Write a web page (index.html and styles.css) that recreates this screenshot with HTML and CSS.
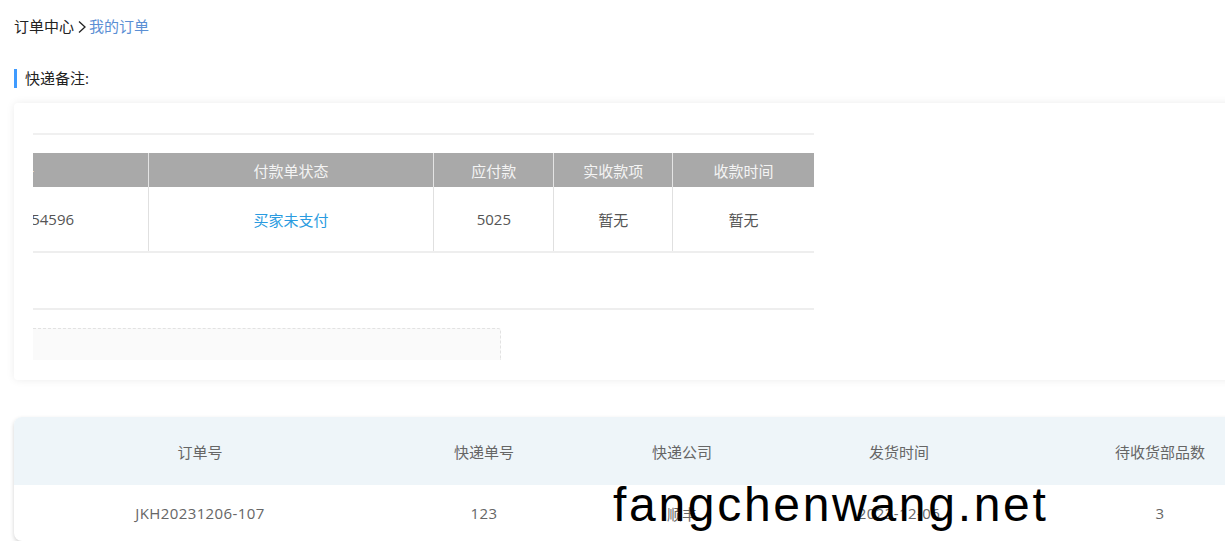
FILE: index.html
```html
<!DOCTYPE html>
<html>

<head>
    <meta charset="utf-8">
    <link rel="stylesheet" href="styles.css">
</head>

<body>

    <div class="crumbs">
        <span>订单中心</span>
        <svg class="crumb-sep" width="10" height="14" viewBox="0 0 10 14"><path d="M2 1.5 L8 7 L2 12.5" fill="none" stroke="#222" stroke-width="1.3"/></svg>
        <a class="crumb-link">我的订单</a>
    </div>

    <div class="section-title">快递备注:</div>

    <div class="card">
        <div class="pay-wrap">
            <div class="pay-scroll">
                <table class="pay-table">
                    <tr>
                        <th class="c-no">付款单号</th>
                        <th class="c-state">付款单状态</th>
                        <th class="c-due">应付款</th>
                        <th class="c-got">实收款项</th>
                        <th class="c-time">收款时间</th>
                    </tr>
                    <tr>
                        <td class="c-no">FKD2023120654596</td>
                        <td class="c-state"><span class="unpaid">买家未支付</span></td>
                        <td>5025</td>
                        <td>暂无</td>
                        <td>暂无</td>
                    </tr>
                </table>
            </div>
            <div class="pay-foot"></div>
            <div class="remark-box"></div>
        </div>
    </div>

    <div class="ship-card">
        <div class="ship-row ship-head">
            <div>订单号</div>
            <div>快递单号</div>
            <div>快递公司</div>
            <div>发货时间</div>
            <div>待收货部品数</div>
        </div>
        <div class="ship-row">
            <div class="num">JKH20231206-107</div>
            <div class="num">123</div>
            <div>顺丰</div>
            <div class="num">2023-12-06</div>
            <div class="num">3</div>
        </div>
        <div class="watermark">fangchenwang.net</div>
    </div>

</body>

</html>
```

FILE: styles.css
```css
html,
body {
    margin: 0;
    padding: 0;
    overflow: hidden;
    background: #fff;
}

body {
    padding-left: 14px;
    font-family: "Open Sans", "Noto Sans CJK SC", sans-serif;
    font-size: 15px;
    color: #222;
    width: 1400px;
}

.crumbs {
    display: flex;
    align-items: center;
    height: 18px;
    margin-top: 17px;
    line-height: 18px;
    font-size: 15px;
}

.crumb-sep {
    margin: 2px 2px 0 3px;
}

.crumb-link {
    color: #5b8fd4;
}

.section-title {
    margin-top: 34px;
    height: 19px;
    line-height: 19px;
    padding-left: 8px;
    border-left: 3px solid #3f9bff;
    box-sizing: border-box;
    font-size: 15px;
    color: #222;
}

.card {
    margin-top: 15px;
    width: 1280px;
    height: 277px;
    box-sizing: border-box;
    padding: 30px 0 0 19px;
    background: #fff;
    border-radius: 4px;
    box-shadow: 0 0 8px rgba(0, 0, 0, 0.08);
}

.pay-wrap {
    width: 781px;
}

.pay-scroll {
    overflow: hidden;
    border-top: 2px solid #f0f0f0;
    padding-top: 18px;
}

.pay-table {
    margin-left: -172px;
    border-collapse: collapse;
    font-size: 15px;
    color: #555;
}

.pay-table th {
    height: 34px;
    padding: 0;
    background: #a9a9a9;
    color: #f4f4f4;
    font-weight: normal;
    border-left: 1px solid #e4e4e4;
}

.pay-table td {
    height: 64px;
    padding: 0;
    text-align: center;
    border-left: 1px solid #e0e0e0;
    border-bottom: 2px solid #eeeeee;
}

.pay-table th:first-child,
.pay-table td:first-child {
    border-left: none;
}

.c-no { width: 287px; }
.c-state { width: 285px; }
.c-due { width: 119px; }
.c-got { width: 118px; }
.c-time { width: 141px; }

.unpaid {
    color: #2a9be0;
}

.pay-foot {
    height: 55px;
    border-bottom: 2px solid #eeeeee;
}

.remark-box {
    margin-top: 18px;
    width: 468px;
    height: 32px;
    box-sizing: border-box;
    background: #fafafa;
    border-top: 1px dashed #e2e2e2;
    border-right: 1px dashed #e2e2e2;
    border-radius: 0 3px 0 0;
}

.ship-card {
    position: relative;
    margin-top: 37px;
    width: 1290px;
    background: #fff;
    border-radius: 8px;
    overflow: hidden;
    box-shadow: 0 2px 4px rgba(0, 0, 0, 0.18);
    color: #666;
}

.ship-row {
    display: grid;
    grid-template-columns: 372px 196px 200px 234px 288px;
    height: 56px;
    align-items: center;
    text-align: center;
}

.ship-row .num {
    letter-spacing: 0.4px;
}

.ship-head {
    height: 68px;
    background: #eef5f9;
}

.watermark {
    position: absolute;
    left: 599px;
    top: 58px;
    font-family: "Liberation Sans", Arial, sans-serif;
    font-size: 48px;
    letter-spacing: 2.7px;
    color: #000;
    line-height: 60px;
}
```
